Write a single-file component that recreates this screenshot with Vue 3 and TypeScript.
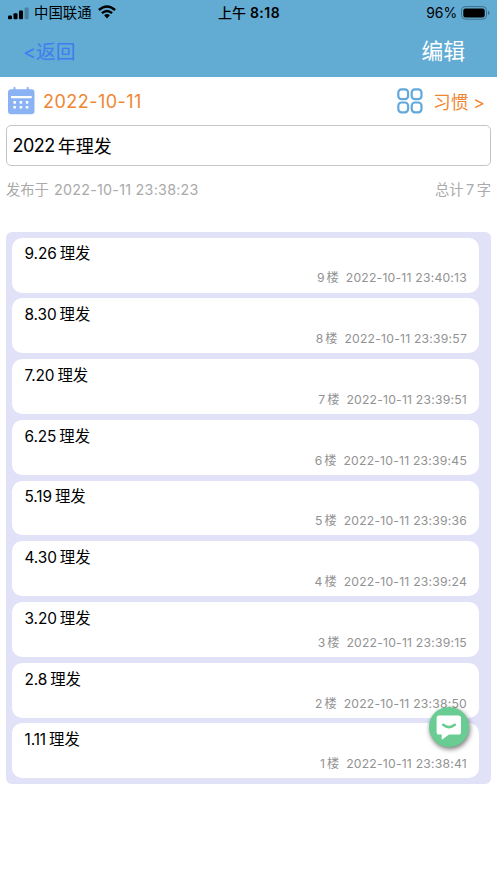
<script setup lang="ts">
interface Reply {
  day: string
  floor: number
  time: string
}

const replies: Reply[] = [
  { day: '9.26', floor: 9, time: '23:40:13' },
  { day: '8.30', floor: 8, time: '23:39:57' },
  { day: '7.20', floor: 7, time: '23:39:51' },
  { day: '6.25', floor: 6, time: '23:39:45' },
  { day: '5.19', floor: 5, time: '23:39:36' },
  { day: '4.30', floor: 4, time: '23:39:24' },
  { day: '3.20', floor: 3, time: '23:39:15' },
  { day: '2.8', floor: 2, time: '23:38:50' },
  { day: '1.11', floor: 1, time: '23:38:41' },
]

const dots = [0, 1, 2, 3, 4, 5]
</script>

<template>
  <main class="screen">
    <header class="top">
      <div class="status">
        <div class="carrier">
          <svg class="signal" width="21" height="13" viewBox="0 0 21 13">
            <rect x="0" y="8.6" width="4" height="3.6" rx="1" />
            <rect x="5.5" y="6.3" width="4" height="5.9" rx="1" />
            <rect x="11" y="3.4" width="4" height="8.8" rx="1" />
            <rect x="16.6" y="0.4" width="4" height="11.8" rx="1" opacity="0.25" />
          </svg>
          <span class="carrier-name">中国联通</span>
          <svg class="wifi" width="18" height="14" viewBox="0 0 18 14">
            <g fill="none" stroke="#000" stroke-width="2.4">
              <path d="M0.9 5 Q9 -2.2 17.1 5" />
              <path d="M3.9 8.2 Q9 3.8 14.1 8.2" />
            </g>
            <path d="M6.1 10.2 Q9 7.9 11.9 10.2 L9 13.4 Z" />
          </svg>
        </div>
        <div class="clock">上午<b>8:18</b></div>
        <div class="power">
          <span>96%</span>
          <svg width="29" height="14" viewBox="0 0 29 14">
            <rect x="0.5" y="0.6" width="25" height="12.6" rx="3.8" fill="none" stroke="#3f6f88" />
            <rect x="2.3" y="2.4" width="21.4" height="9" rx="2.2" />
            <path d="M27 4.7 Q28.7 5.3 28.7 6.9 Q28.7 8.5 27 9.1 Z" fill="#3f6f88" />
          </svg>
        </div>
      </div>
      <nav class="nav">
        <a class="back">&lt;返回</a>
        <a class="edit">编辑</a>
      </nav>
    </header>

    <section class="datebar">
      <svg class="calendar" width="28" height="28" viewBox="0 0 28 28">
        <rect x="1" y="2.2" width="26.5" height="25" rx="3.2" fill="#8bb3f4" />
        <path d="M7.5 0.9V6M20.7 0.9V6" stroke="#8bb3f4" stroke-width="2" stroke-linecap="round" />
        <rect x="4" y="8.9" width="20.8" height="2.3" rx="0.6" fill="#fff" />
        <rect
          v-for="d in dots"
          :key="d"
          :x="6.4 + (d % 3) * 6.2"
          :y="d < 3 ? 14.1 : 19"
          width="2.6"
          height="2.6"
          rx="0.6"
          fill="#fff"
        />
      </svg>
      <span class="date">2022-10-11</span>
      <svg class="grid" width="26" height="26" viewBox="0 0 26 26" fill="none" stroke="#61a8dd" stroke-width="2.2">
        <rect x="1.3" y="1.3" width="9.8" height="9.8" rx="3.2" />
        <rect x="14.7" y="1.3" width="9.8" height="9.8" rx="3.2" />
        <rect x="1.3" y="14.5" width="9.8" height="9.8" rx="3.2" />
        <rect x="14.7" y="14.5" width="9.8" height="9.8" rx="3.2" />
      </svg>
      <span class="habit">习惯 <span class="more">&gt;</span></span>
    </section>

    <div class="title"><span class="year">2022</span>年理发</div>

    <div class="info">
      <span>发布于 <span class="stamp">2022-10-11 23:38:23</span></span>
      <span class="count">总计<span class="num">7</span>字</span>
    </div>

    <section class="list">
      <article v-for="r in replies" :key="r.floor" class="card">
        <div class="text"><span class="day">{{ r.day }}</span>理发</div>
        <div class="meta">
          <span class="floor">{{ r.floor }}</span>楼<span class="when">2022-10-11 {{ r.time }}</span>
        </div>
      </article>
    </section>

    <button class="chat" aria-label="chat">
      <svg width="40" height="40" viewBox="0 0 40 40">
        <path
          d="M10 8.6H29.4Q32 8.6 32 11.2V25Q32 27.6 29.4 27.6H20L13.6 32.3Q12.7 32.7 12.7 31.7V27.6H10Q7.6 27.6 7.6 25V11.2Q7.6 8.6 10 8.6Z"
          fill="#fff"
        />
        <path d="M14.2 17.8Q20 22.4 25.8 17.8" fill="none" stroke="#68cc93" stroke-width="2.6" stroke-linecap="round" />
      </svg>
    </button>
  </main>
</template>

<style>
body {
  background: #fff;
}
</style>

<style scoped>
.screen {
  box-sizing: border-box;
  position: relative;
  width: 497px;
  height: 883px;
  overflow: hidden;
  background: #fff;
  font-family: Inter, "Noto Sans CJK SC", sans-serif;
  color: #000;
}
.top {
  height: 77px;
  background: #62acd4;
}
.status {
  display: grid;
  grid-template-columns: 1fr auto 1fr;
  align-items: center;
  height: 26px;
  padding: 0 7px 0 8px;
  font-size: 14px;
  line-height: 26px;
}
.carrier {
  display: flex;
  align-items: center;
}
.carrier-name {
  margin-left: 5px;
  font-size: 14.4px;
}
.wifi {
  margin-left: 6px;
  margin-bottom: 2px;
}
.clock {
  font-weight: 500;
}
.clock b {
  margin-left: 4px;
  font-weight: 600;
  letter-spacing: 0.45px;
}
.power {
  display: flex;
  align-items: center;
  justify-content: flex-end;
  gap: 4px;
}
.power span {
  letter-spacing: -0.15px;
}
.power svg {
  margin-bottom: 1px;
}
.nav {
  display: flex;
  justify-content: space-between;
  align-items: center;
  height: 48px;
  padding: 0 32px 0 23px;
}
.back {
  color: #3f7df0;
  font-size: 19.8px;
}
.edit {
  padding-bottom: 2px;
  color: #fff;
  font-size: 21.8px;
}
.datebar {
  display: flex;
  align-items: center;
  height: 48px;
  padding: 0 12px 0 7px;
  color: #ef8632;
}
.date {
  margin-left: 8px;
  font-size: 18px;
  letter-spacing: 0.47px;
}
.grid {
  margin-left: auto;
}
.habit {
  margin-left: 10px;
  font-size: 17.7px;
}
.title {
  display: flex;
  align-items: center;
  box-sizing: border-box;
  height: 41px;
  margin: 0 6px;
  padding: 0 5.5px 1px;
  border: 1px solid #c5c5c5;
  border-radius: 5px;
  font-size: 18px;
}
.year {
  margin-right: 3px;
  letter-spacing: -0.5px;
}
.info {
  display: flex;
  justify-content: space-between;
  align-items: center;
  height: 45px;
  padding: 0 6px;
  color: #aaa;
  font-size: 14.3px;
}
.stamp {
  margin-left: 1px;
  letter-spacing: 0.26px;
}
.num {
  margin: 0 2.5px;
}
.list {
  display: flex;
  flex-direction: column;
  gap: 5.8px;
  box-sizing: border-box;
  height: 552.8px;
  margin: 20.6px 6px 0;
  padding: 6px 12px 6px 6px;
  border-radius: 6px;
  background: #e1e1f8;
}
.card {
  box-sizing: border-box;
  height: 55px;
  padding: 4.8px 12px 0;
  border-radius: 10px;
  background: #fff;
}
.text {
  height: 24px;
  font-size: 15.4px;
  line-height: 24px;
}
.day {
  margin-left: 0.5px;
  margin-right: 3px;
  letter-spacing: -0.1px;
}
.meta {
  height: 24px;
  color: #929292;
  font-size: 12.2px;
  line-height: 24px;
  text-align: right;
}
.floor {
  margin-right: 2px;
}
.when {
  margin-left: 7px;
  letter-spacing: 0.21px;
}
.chat {
  position: absolute;
  top: 707px;
  left: 429px;
  width: 40px;
  height: 40px;
  padding: 0;
  border: 0;
  border-radius: 50%;
  background: #68cc93;
  box-shadow: 1px 2px 5px rgba(0, 0, 0, 0.55);
}
.chat svg {
  display: block;
}
</style>
